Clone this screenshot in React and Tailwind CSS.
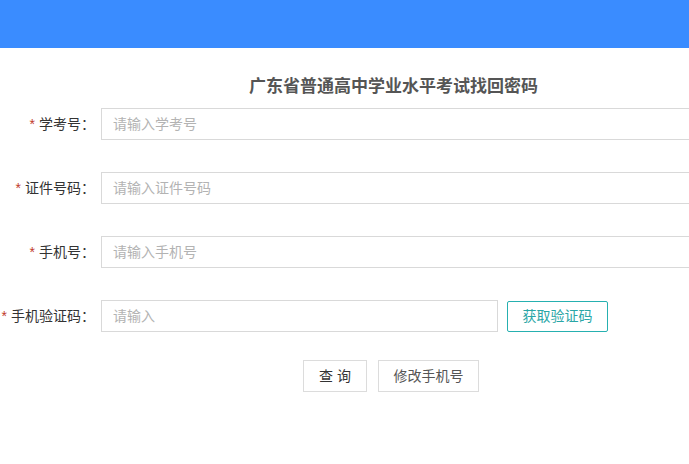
import React from 'react';

const font = { fontFamily: '"Liberation Sans", "Noto Sans CJK SC", sans-serif' };

function Label({ text }) {
  return (
    <label className="w-[95px] shrink-0 whitespace-nowrap text-right text-[14px] text-[#333]">
      <span className="text-[#c0392b] mr-[4px]">*</span>
      {text}：
    </label>
  );
}

function Field({ label, placeholder }) {
  return (
    <div className="flex items-center h-8">
      <Label text={label} />
      <input
        className="ml-[6px] h-8 w-[600px] shrink-0 border border-[#d9d9d9] px-[11px] text-[14px] text-[#333] placeholder:text-[#b3b3b3] outline-none"
        placeholder={placeholder}
      />
    </div>
  );
}

function CodeField() {
  return (
    <div className="flex items-center h-8">
      <Label text="手机验证码" />
      <input
        className="ml-[6px] h-8 w-[397px] shrink-0 border border-[#d9d9d9] px-[11px] text-[14px] placeholder:text-[#b3b3b3] outline-none"
        placeholder="请输入"
      />
      <button className="ml-[9px] w-[101px] h-[31px] rounded-[2px] border border-solid border-[#26b0b0] bg-white text-[14px] text-[#2aa6a6]">
        获取验证码
      </button>
    </div>
  );
}

export default function App() {
  return (
    <div className="w-[689px] h-[464px] overflow-hidden bg-white" style={font}>
      <div className="h-12 bg-[#3a8cff]" />
      <h1 className="mt-[28px] ml-[249px] text-[17px] leading-[22px] font-bold text-[#555]">
        广东省普通高中学业水平考试找回密码
      </h1>
      <div className="mt-[10px] flex flex-col gap-8">
        <Field label="学考号" placeholder="请输入学考号" />
        <Field label="证件号码" placeholder="请输入证件号码" />
        <Field label="手机号" placeholder="请输入手机号" />
        <CodeField />
      </div>
      <div className="mt-7 ml-[303px] flex gap-[11px]">
        <button className="w-16 h-8 border border-[#dcdcdc] bg-white text-[14px] text-[#333]">查 询</button>
        <button className="w-[101px] h-8 border border-[#dcdcdc] bg-white text-[14px] text-[#555]">修改手机号</button>
      </div>
    </div>
  );
}
